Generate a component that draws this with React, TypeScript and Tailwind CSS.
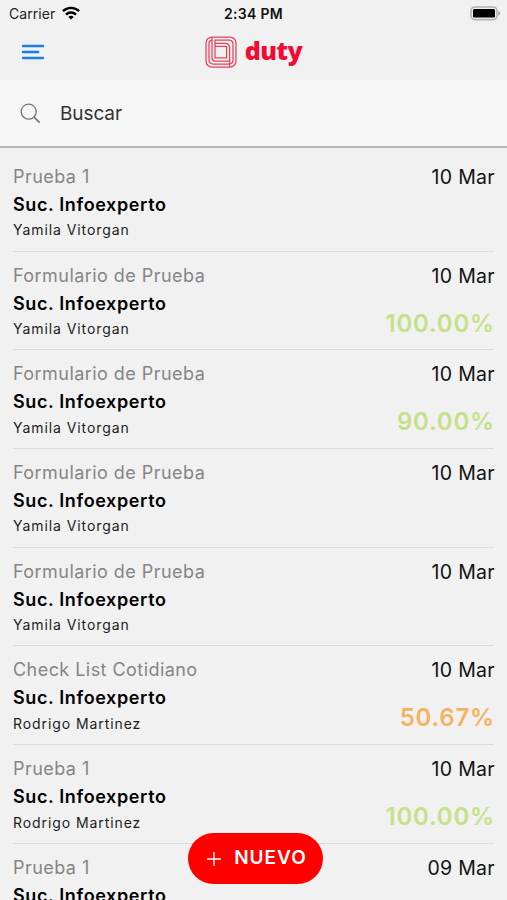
import { clsx } from "clsx";

interface Entry {
  form: string;
  branch: string;
  user: string;
  date: string;
  score?: string;
  tone?: "good" | "warn";
}

const branch = "Suc. Infoexperto";

const entries: Entry[] = [
  { form: "Prueba 1", branch, user: "Yamila Vitorgan", date: "10 Mar" },
  { form: "Formulario de Prueba", branch, user: "Yamila Vitorgan", date: "10 Mar", score: "100.00%", tone: "good" },
  { form: "Formulario de Prueba", branch, user: "Yamila Vitorgan", date: "10 Mar", score: "90.00%", tone: "good" },
  { form: "Formulario de Prueba", branch, user: "Yamila Vitorgan", date: "10 Mar" },
  { form: "Formulario de Prueba", branch, user: "Yamila Vitorgan", date: "10 Mar" },
  { form: "Check List Cotidiano", branch, user: "Rodrigo Martinez", date: "10 Mar", score: "50.67%", tone: "warn" },
  { form: "Prueba 1", branch, user: "Rodrigo Martinez", date: "10 Mar", score: "100.00%", tone: "good" },
  { form: "Prueba 1", branch, user: "Rodrigo Martinez", date: "09 Mar" },
];

function WifiIcon() {
  return (
    <svg viewBox="0 0 18 14" className="-mt-[2px] h-[14px] w-[18px]" fill="none" stroke="#000" strokeWidth="2.4">
      <path d="M0.9 5.2C5.4 0.7 12.6 0.7 17.1 5.2" />
      <path d="M4 8.6C6.8 5.8 11.2 5.8 14 8.6" />
      <path d="M9 13.6L6.3 10.9C7.8 9.4 10.2 9.4 11.7 10.9Z" fill="#000" stroke="none" />
    </svg>
  );
}

function BatteryIcon() {
  return (
    <svg viewBox="0 0 31 15" className="h-[15px] w-[31px]">
      <rect x="1" y="1" width="26" height="12.6" rx="3.8" fill="#f1f1f1" stroke="#b3b3b3" strokeWidth="1.6" />
      <rect x="3" y="3" width="22" height="8.6" rx="1.4" fill="#000" />
      <path d="M28.2 5.1C31 6 31 8.6 28.2 9.5Z" fill="#aaa" />
    </svg>
  );
}

function StatusBar() {
  return (
    <div className="grid h-[27px] grid-cols-[1fr_auto_1fr] items-center pl-[9px] pr-[6px] text-[14px]">
      <div className="flex items-center gap-[7px] text-[#222]">
        <span className="tracking-[0.05px]">Carrier</span>
        <WifiIcon />
      </div>
      <span className="-ml-[3px] text-center font-semibold tracking-[0.3px] text-[#111]">2:34 PM</span>
      <div className="flex justify-end">
        <BatteryIcon />
      </div>
    </div>
  );
}

function DutyLogo() {
  return (
    <div className="flex items-center gap-[8px]">
      <svg viewBox="0 0 32 32" className="size-[32px]" fill="none" stroke="#e6405c" strokeWidth="1.25">
        <rect x="1" y="1" width="30" height="30" rx="6" />
        <path d="M7 1.2V22Q7 25 10 25H24.6V12Q24.6 7.4 20.5 7.4H10" />
        <path d="M7 4.2Q4 4.4 4 8V23.5Q4 28 8.5 28H24Q28 28 28 24V8.5Q28 4.2 24 4.2H10V21.8H21.6V10.4H10" />
        <path d="M24.6 25V31" />
      </svg>
      {/* Wordmark */}
      <span className="-mt-[3px] font-['Open_Sans',sans-serif] text-[25px] leading-[32px] font-extrabold tracking-[-0.5px] text-[#f20a32]">
        duty
      </span>
    </div>
  );
}

function Header() {
  return (
    <header className="grid h-[53px] grid-cols-[1fr_auto_1fr] items-center px-[21px] pb-[4px]">
      <button className="justify-self-start" aria-label="Menu">
        <svg viewBox="0 0 24 18" className="h-[18px] w-[24px]" stroke="#1a80e5" strokeWidth="2.4" strokeLinecap="round">
          <path d="M2 3H22M2 9H17.2M2 15H22" />
        </svg>
      </button>
      <DutyLogo />
      <div />
    </header>
  );
}

function SearchBar() {
  return (
    <div className="flex h-[68px] items-center gap-[19px] border-b-2 border-[#b7b7b7] bg-[#f6f6f6] pl-[20px]">
      <svg viewBox="0 0 21 21" className="size-[21px]" fill="none" stroke="#777" strokeWidth="1.3">
        <circle cx="8.7" cy="8.7" r="7.5" />
        <path d="M14.1 14.1L19.6 19.6" strokeWidth="1.6" />
      </svg>
      <span className="mt-[2px] text-[19px] tracking-[-0.1px] text-[#333]">Buscar</span>
    </div>
  );
}

function EntryRow({ entry }: { entry: Entry }) {
  return (
    <li className="flex h-[98.7px] shrink-0 justify-between border-b border-[#dcdcdc] pt-[10px]">
      <div className="flex flex-col">
        <span className="text-[18px] leading-[28px] tracking-[0.45px] text-[#858585]">{entry.form}</span>
        <span className="text-[18px] leading-[27.5px] font-semibold tracking-[0.62px] text-black">{entry.branch}</span>
        <span className="text-[14px] leading-[24px] tracking-[0.92px] text-[#1c1c1c]">{entry.user}</span>
      </div>
      <div className="-mr-px flex flex-col items-end">
        <span className="text-[19.5px] leading-[29px] tracking-[0.3px] text-[#111]">{entry.date}</span>
        {entry.score && (
          <span
            className={clsx(
              "mt-[16px] text-[24px] leading-[34px] font-semibold tracking-[0.8px]",
              entry.tone === "warn" ? "text-[#f4b35e]" : "text-[#c3e288]"
            )}
          >
            {entry.score}
          </span>
        )}
      </div>
    </li>
  );
}

export default function App() {
  return (
    <div className="relative flex h-[900px] w-[507px] flex-col overflow-hidden bg-[#f1f1f1] font-[Inter,sans-serif]">
      <StatusBar />
      <Header />
      <SearchBar />
      <ul className="flex min-h-0 flex-1 flex-col overflow-hidden px-[13px] pt-[4.9px]">
        {entries.map((entry, i) => (
          <EntryRow key={i} entry={entry} />
        ))}
      </ul>

      {/* Floating action button */}
      <button className="absolute bottom-[16px] left-[188px] flex h-[51px] w-[135px] items-center justify-center gap-[13px] rounded-full bg-[#ff0000] text-white">
        <svg viewBox="0 0 14 14" className="size-[14px]" stroke="currentColor" strokeWidth="1.4">
          <path d="M7 0V14M0 7H14" />
        </svg>
        <span className="-mt-[2px] -mr-[3px] text-[19px] leading-[24px] font-semibold tracking-[1px]">NUEVO</span>
      </button>
    </div>
  );
}
